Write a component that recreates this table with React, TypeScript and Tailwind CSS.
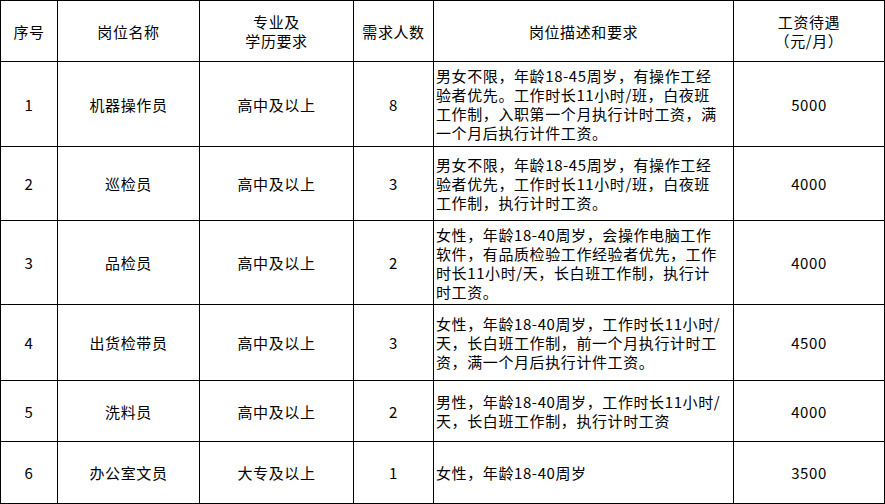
import React from 'react';

type Job = {
  no: string;
  name: string;
  edu: string;
  count: string;
  desc: string[];
  pay: string;
};

const jobs: Job[] = [
  {
    no: '1',
    name: '机器操作员',
    edu: '高中及以上',
    count: '8',
    desc: [
      '男女不限，年龄18-45周岁，有操作工经',
      '验者优先。工作时长11小时/班，白夜班',
      '工作制，入职第一个月执行计时工资，满',
      '一个月后执行计件工资。',
    ],
    pay: '5000',
  },
  {
    no: '2',
    name: '巡检员',
    edu: '高中及以上',
    count: '3',
    desc: ['男女不限，年龄18-45周岁，有操作工经', '验者优先，工作时长11小时/班，白夜班', '工作制，执行计时工资。'],
    pay: '4000',
  },
  {
    no: '3',
    name: '品检员',
    edu: '高中及以上',
    count: '2',
    desc: ['女性，年龄18-40周岁，会操作电脑工作', '软件，有品质检验工作经验者优先，工作', '时长11小时/天，长白班工作制，执行计', '时工资。'],
    pay: '4000',
  },
  {
    no: '4',
    name: '出货检带员',
    edu: '高中及以上',
    count: '3',
    desc: ['女性，年龄18-40周岁，工作时长11小时/', '天，长白班工作制，前一个月执行计时工', '资，满一个月后执行计件工资。'],
    pay: '4500',
  },
  {
    no: '5',
    name: '洗料员',
    edu: '高中及以上',
    count: '2',
    desc: ['男性，年龄18-40周岁，工作时长11小时/', '天，长白班工作制，执行计时工资'],
    pay: '4000',
  },
  {
    no: '6',
    name: '办公室文员',
    edu: '大专及以上',
    count: '1',
    desc: ['女性，年龄18-40周岁'],
    pay: '3500',
  },
];

function Cell({ children }: { children: React.ReactNode }) {
  return <div className="bg-white flex items-center justify-center text-center">{children}</div>;
}

export default function App() {
  return (
    <div className="w-[885px] h-[504px] bg-white">
      <div
        className="grid w-[885px] grid-cols-[56px_141px_153px_79px_299px_150px] grid-rows-[60px_84px_73px_83px_75px_60px_61px] gap-px bg-black p-px text-[15px] leading-[19px] tracking-[0.6px] text-black"
        style={{ fontFamily: '"Noto Sans CJK SC", "Noto Sans", sans-serif' }}
      >
        {/* header */}
        <Cell>序号</Cell>
        <Cell>岗位名称</Cell>
        <Cell>
          专业及
          <br />
          学历要求
        </Cell>
        <Cell>需求人数</Cell>
        <Cell>岗位描述和要求</Cell>
        <Cell>
          工资待遇
          <br />
          （元/月）
        </Cell>

        {jobs.map((j) => (
          <React.Fragment key={j.no}>
            <Cell>{j.no}</Cell>
            <Cell>{j.name}</Cell>
            <Cell>{j.edu}</Cell>
            <Cell>{j.count}</Cell>
            <div className="bg-white flex flex-col justify-center pl-[2px] whitespace-nowrap">
              {j.desc.map((line, i) => (
                <span key={i}>{line}</span>
              ))}
            </div>
            <Cell>{j.pay}</Cell>
          </React.Fragment>
        ))}
      </div>
    </div>
  );
}
